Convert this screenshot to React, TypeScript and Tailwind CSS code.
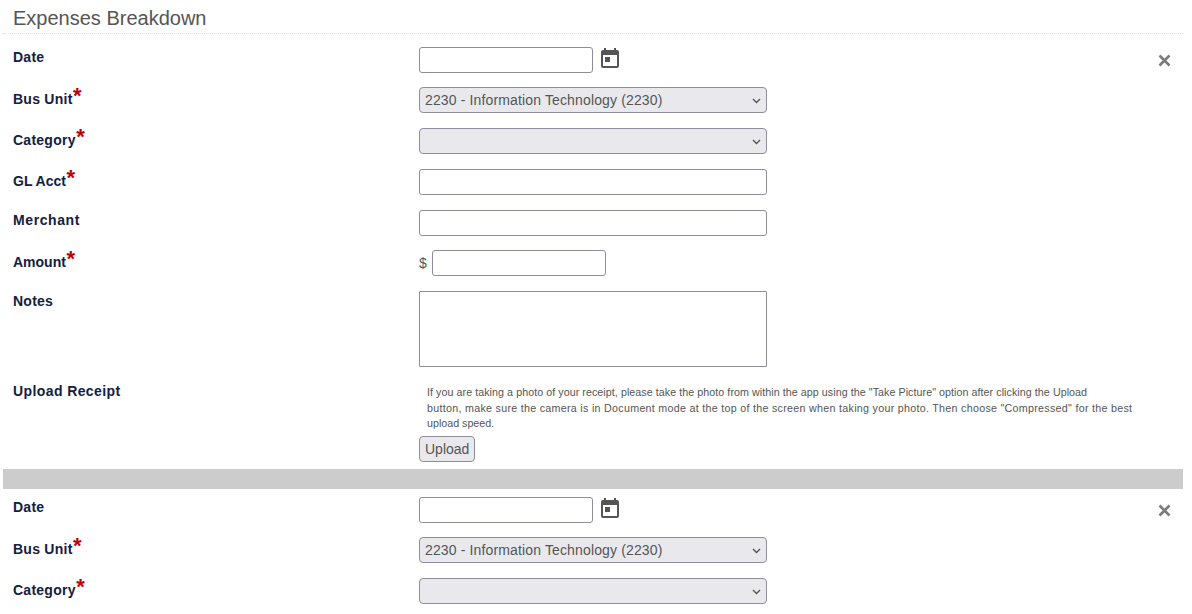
import { MdToday } from "react-icons/md";

const inputClass =
  "block h-[26px] rounded-[3px] border border-[#8f8d9c] bg-white px-[5px] text-sm text-[#555]";

function Label({ text, required, className = "tracking-[0.25px]" }: { text: string; required?: boolean; className?: string }) {
  return (
    <div className={`w-[416px] shrink-0 pl-[10px] text-sm leading-5 font-bold text-[#14203f] ${required ? "pt-[2px]" : ""} ${className}`}>
      {text}
      {required && <span className="relative top-[-1px] ml-[0.5px] text-[22px] leading-[0] font-bold text-[#c00000]">*</span>}
    </div>
  );
}

function SelectBox({ value }: { value?: string }) {
  return (
    <div className="relative h-[26px] w-[348px]">
      <select
        defaultValue={value ?? ""}
        className="block h-[26px] w-full appearance-none rounded-[4px] border border-[#8f8d9c] bg-[#e9e9ed] pl-[5px] text-sm tracking-[0.14px] text-[#555]"
      >
        <option value="">{""}</option>
        <option value="2230">2230 - Information Technology (2230)</option>
      </select>
      <svg width="9" height="6" viewBox="0 0 9 6" className="pointer-events-none absolute top-[11px] right-[6px]">
        <path d="M1 1 L4.5 4.5 L8 1" fill="none" stroke="#555" strokeWidth="1.4" />
      </svg>
    </div>
  );
}

// the second entry is cut off by the fold, only its top rows are visible
function ExpenseForm({ partial }: { partial?: boolean }) {
  return (
    <div className="relative">
      <button className="absolute top-[15px] right-[12px]" aria-label="Remove">
        <svg width="13" height="13" viewBox="0 0 13 13" className="block">
          <path d="M1.5 1.5 L11.5 11.5 M11.5 1.5 L1.5 11.5" stroke="#7a7a7a" strokeWidth="2.6" />
        </svg>
      </button>

      <div className="flex h-[35px] pt-[8px]">
        <Label text="Date" />
        <div className="flex items-start">
          <input className={`${inputClass} w-[174px]`} />
          <MdToday className="ml-[5px] text-[#555]" size={24} />
        </div>
      </div>
      <div className="flex h-[41px] pt-[13px]">
        <Label text="Bus Unit" required />
        <SelectBox value="2230" />
      </div>
      <div className="flex h-[41px] pt-[13px]">
        <Label text="Category" required />
        <SelectBox />
      </div>
      {!partial && (
        <>
          <div className="flex h-[41px] pt-[13px]">
            <Label text="GL Acct" required className="tracking-normal" />
            <input className={`${inputClass} w-[348px]`} />
          </div>
          <div className="flex h-[40px] pt-[13px]">
            <Label text="Merchant" className="tracking-[0.6px]" />
            <input className={`${inputClass} w-[348px]`} />
          </div>
          <div className="flex h-[41px] pt-[13px]">
            <Label text="Amount" required className="tracking-normal" />
            <div className="flex items-start">
              <span className="mr-[5px] text-sm leading-[26px] text-[#555]">$</span>
              <input className={`${inputClass} w-[174px]`} />
            </div>
          </div>
          <div className="flex pt-[13px]">
            <Label text="Notes" />
            <textarea className="block h-[76px] w-[348px] resize-none rounded-[1px] border border-[#8f8d9c] bg-white" />
          </div>
          <div className="flex pt-[14px]">
            <Label text="Upload Receipt" className="tracking-[0.4px]" />
            <div>
              <p className="w-[740px] pt-[4px] pl-2 text-[10.7px] leading-[15.5px] whitespace-nowrap text-[#555]">
                <span className="tracking-[0.06px]">If you are taking a photo of your receipt, please take the photo from within the app using the "Take Picture" option after clicking the Upload</span>
                <br />
                <span className="tracking-[0.29px]">button, make sure the camera is in Document mode at the top of the screen when taking your photo. Then choose "Compressed" for the best</span>
                <br />
                upload speed.
              </p>
              <button className="mt-[4px] block h-[26px] rounded-[4px] border border-[#8f8d9c] bg-[#e9e9ed] px-[5px] text-sm text-[#555]">
                Upload
              </button>
            </div>
          </div>
        </>
      )}
    </div>
  );
}

export default function App() {
  return (
    <div className="h-[614px] w-[1192px] overflow-hidden bg-white font-['Liberation_Sans',Arial,sans-serif]">
      <div className="ml-[3px] w-[1180px]">
        <h3 className="mb-[5px] h-[34px] border-b border-dotted border-[#ddd] pt-[6px] pl-[10px] text-xl leading-6 font-normal text-[#555]">
          Expenses Breakdown
        </h3>
        <ExpenseForm />
        <div className="mt-[7px] h-[20px] bg-[#cccccc]" />
        <ExpenseForm partial />
      </div>
    </div>
  );
}
